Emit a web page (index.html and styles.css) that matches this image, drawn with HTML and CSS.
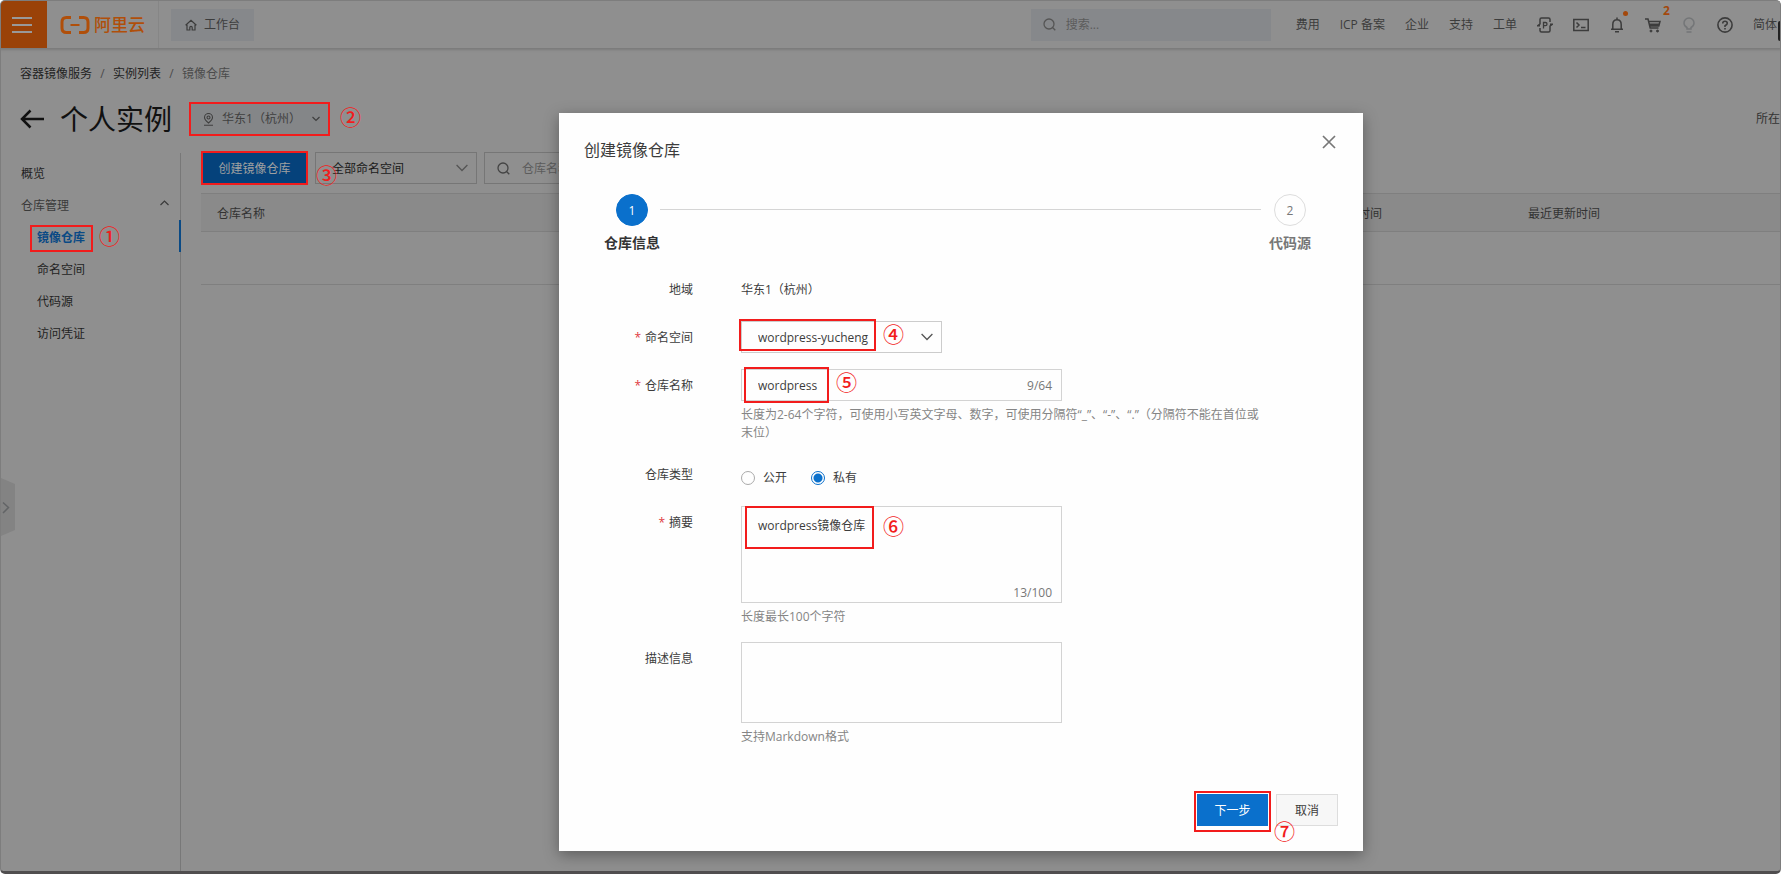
FILE: index.html
```html
<!DOCTYPE html>
<html lang="zh-CN">
<head>
<meta charset="utf-8">
<title>容器镜像服务</title>
<link rel="stylesheet" href="styles.css">
</head>
<body>
<div class="frame">
  <header class="topbar">
    <button class="menu-btn" aria-label="菜单"><span></span><span></span><span></span></button>
    <a class="logo" href="#">
      <svg width="30" height="18" viewBox="0 0 30 18" fill="none" stroke="currentColor"><path d="M11 1.500H6.500Q2 1.500 2 6v6q0 4.500 4.500 4.500H11M19 1.500h4.500Q28 1.500 28 6v6q0 4.500-4.500 4.500H19" stroke-width="3"/><path d="M10.500 9h9" stroke-width="2"/></svg>
      <span>阿里云</span>
    </a>
    <a class="workbench" href="#">
      <svg width="12" height="12" viewBox="0 0 12 12" fill="none" stroke="currentColor" stroke-width="1.200"><path d="M.6 6.200 6 1.200l5.400 5M2 5v6h2.800V8.500a1.200 1.200 0 0 1 2.400 0V11H10V5"/></svg>
      工作台
    </a>
    <label class="top-search">
      <svg width="13" height="13" viewBox="0 0 13 13" fill="none" stroke="currentColor" stroke-width="1.300"><circle cx="6" cy="6" r="5"/><path d="m9.500 9.500 2.800 2.800"/></svg>
      <input type="text" placeholder="搜索..." aria-label="搜索">
    </label>
    <nav class="topnav">
      <a href="#">费用</a><a href="#">ICP 备案</a><a href="#">企业</a><a href="#">支持</a><a href="#">工单</a>
      <a href="#" aria-label="应用"><svg width="16" height="16" viewBox="0 0 16 16" fill="none" stroke="currentColor" stroke-width="1.500"><path d="M3 4.500V2.500Q3 1 4.500 1h7Q13 1 13 2.500V5M3 11v2.500Q3 15 4.500 15h7q1.500 0 1.500-1.500V11M3 4.500V7L.8 8.700H3M13 11.500V9l2.200-1.700H13"/><path d="M6.500 11.500v-6h2q1.500 0 1.500 1.600T8.500 8.700h-2" stroke-width="1.300"/></svg></a>
      <a href="#" aria-label="命令行"><svg width="16" height="16" viewBox="0 0 16 16" fill="none" stroke="currentColor" stroke-width="1.500"><path d="M.8 2.500h14.400v11H.8zM3.500 5.500 6 8l-2.500 2.500M8 10.500h4.500"/></svg></a>
      <a class="has-badge" href="#" aria-label="消息"><svg width="16" height="16" viewBox="0 0 16 16" fill="none" stroke="currentColor" stroke-width="1.500"><path d="M8 .5v2M2 12.200h12M3.800 12V7.500Q3.800 2.700 8 2.700t4.200 4.800V12M6 14.700h4"/></svg><i class="dot"></i></a>
      <a class="has-badge" href="#" aria-label="购物车"><svg width="16" height="16" viewBox="0 0 16 16" fill="none" stroke="currentColor" stroke-width="1.500"><path d="M0 2h3l2.200 9h8.300"/><path d="M4 4.500h11L13.800 9H5"/><path d="M4.500 6.500h10L14 9H5z" fill="currentColor" stroke="none"/><circle cx="6" cy="14" r="1" fill="currentColor" stroke-width="1"/><circle cx="12.500" cy="14" r="1" fill="currentColor" stroke-width="1"/></svg><b class="count">2</b></a>
      <a class="faint" href="#" aria-label="提示"><svg width="16" height="16" viewBox="0 0 16 16" fill="none" stroke="currentColor" stroke-width="1.500"><path d="M6 12v-1.500Q3 9 3 6a5 5 0 0 1 10 0q0 3-3 4.500V12zM5.500 15h5"/></svg></a>
      <a href="#" aria-label="帮助"><svg width="16" height="16" viewBox="0 0 16 16" fill="none" stroke="currentColor" stroke-width="1.600"><circle cx="8" cy="8" r="7.100"/><path d="M5.700 6.500Q5.800 4.300 8 4.300t2.300 2Q10.300 7.500 8 8.800V10M8 11v1.600"/></svg></a>
      <a href="#">简体</a>
    </nav>
    <i class="edge-tab"></i>
  </header>

  <nav class="crumbs"><a href="#">容器镜像服务</a><i>/</i><a href="#">实例列表</a><i>/</i><span>镜像仓库</span></nav>

  <div class="title-row">
    <button class="back" aria-label="返回"><svg width="24" height="20" viewBox="0 0 24 20" fill="none" stroke="currentColor" stroke-width="2.500"><path d="M24 10H2M10.500 1.500 2 10l8.500 8.500"/></svg></button>
    <h1>个人实例</h1>
    <button class="region">
      <svg width="11" height="13" viewBox="0 0 11 13" fill="none" stroke="currentColor" stroke-width="1.100"><path d="M5.500 10Q1.500 6.800 1.500 4.500a4 4 0 0 1 8 0Q9.500 6.800 5.500 10zM1 12.300h9"/><circle cx="5.500" cy="4.500" r="1.500"/></svg>
      <span>华东1（杭州）</span>
      <svg width="8" height="6" viewBox="0 0 8 6" fill="none" stroke="currentColor" stroke-width="1.200"><path d="m.5 1 3.500 3.500L7.500 1"/></svg>
    </button>
    <span class="num">②</span>
    <span class="located">所在</span>
  </div>

  <div class="body">
    <aside class="sidebar">
      <a href="#">概览</a>
      <button class="group">仓库管理<svg width="9" height="6" viewBox="0 0 9 6" fill="none" stroke="currentColor" stroke-width="1.200"><path d="m.5 5 4-4 4 4"/></svg></button>
      <a class="sub active" href="#">镜像仓库<i class="mark mark-nav"></i><span class="num num-nav">①</span></a>
      <a class="sub" href="#">命名空间</a>
      <a class="sub" href="#">代码源</a>
      <a class="sub" href="#">访问凭证</a>
    </aside>
    <main class="content">
      <div class="toolbar">
        <button class="create">创建镜像仓库</button>
        <div class="select filter">
          <select aria-label="命名空间筛选"><option>全部命名空间</option></select>
          <svg width="12" height="8" viewBox="0 0 12 8" fill="none" stroke="currentColor" stroke-width="1.300"><path d="m.6 1 5.400 5.500L11.400 1"/></svg>
          <span class="num num-filter">③</span>
        </div>
        <label class="repo-search">
          <svg width="13" height="13" viewBox="0 0 13 13" fill="none" stroke="currentColor" stroke-width="1.300"><circle cx="6" cy="6" r="5"/><path d="m9.500 9.500 2.800 2.800"/></svg>
          <input type="text" placeholder="仓库名称" aria-label="仓库名称">
        </label>
      </div>
      <table class="repos">
        <thead><tr><th class="c-name">仓库名称</th><th class="c-created">创建时间</th><th>最近更新时间</th></tr></thead>
        <tbody><tr><td colspan="3"></td></tr></tbody>
      </table>
    </main>
  </div>

  <button class="handle" aria-label="展开"><svg width="14" height="58" viewBox="0 0 14 58" fill="none"><path d="M0 0 14 6v46L0 58z" fill="#838383"/><path d="m2 24.500 5.500 5L2 35" stroke="#626466" stroke-width="1.500"/></svg></button>
</div>

<section class="dialog" role="dialog" aria-labelledby="dlg-title">
  <div class="dlg-head">
    <h2 id="dlg-title">创建镜像仓库</h2>
    <button class="close" aria-label="关闭"><svg width="14" height="14" viewBox="0 0 14 14" fill="none" stroke="currentColor" stroke-width="1.700"><path d="m1 1 12 12M13 1 1 13"/></svg></button>
  </div>
  <ol class="steps">
    <li class="step on"><b>1</b><span>仓库信息</span></li>
    <li class="bar" aria-hidden="true"></li>
    <li class="step"><b>2</b><span>代码源</span></li>
  </ol>
  <form class="form">
    <div class="row"><span class="label">地域</span><div class="plain">华东1（杭州）</div></div>
    <div class="row">
      <label class="label req" for="ns">命名空间</label>
      <div class="field">
        <div class="select ns">
          <select id="ns"><option>wordpress-yucheng</option></select>
          <svg width="12" height="8" viewBox="0 0 12 8" fill="none" stroke="currentColor" stroke-width="1.300"><path d="m.6 1 5.400 5.500L11.400 1"/></svg>
          <i class="mark mark-ns"></i><span class="num num-ns">④</span>
        </div>
      </div>
    </div>
    <div class="row">
      <label class="label req" for="repo">仓库名称</label>
      <div class="field">
        <div class="box"><input id="repo" type="text" value="wordpress"><span class="counter">9/64</span>
          <i class="mark mark-repo"></i><span class="num num-repo">⑤</span></div>
        <p class="help">长度为2-64个字符，可使用小写英文字母、数字，可使用分隔符“_”、“-”、“.”（分隔符不能在首位或末位）</p>
      </div>
    </div>
    <div class="row">
      <span class="label">仓库类型</span>
      <div class="radios">
        <label><input type="radio" name="type">公开</label>
        <label><input type="radio" name="type" checked>私有</label>
      </div>
    </div>
    <div class="row">
      <label class="label req" for="sum">摘要</label>
      <div class="field">
        <div class="box area"><textarea id="sum">wordpress镜像仓库</textarea><span class="counter">13/100</span>
          <i class="mark mark-sum"></i><span class="num num-sum">⑥</span></div>
        <p class="help">长度最长100个字符</p>
      </div>
    </div>
    <div class="row">
      <label class="label" for="desc">描述信息</label>
      <div class="field">
        <div class="box desc"><textarea id="desc"></textarea></div>
        <p class="help">支持Markdown格式</p>
      </div>
    </div>
    <div class="actions">
      <div class="next-wrap"><button class="primary" type="button">下一步</button><i class="mark mark-next"></i><span class="num num-next">⑦</span></div>
      <button class="cancel" type="button">取消</button>
    </div>
  </form>
</section>
</body>
</html>
```
FILE: styles.css
```css
* { box-sizing: border-box; }
html { height: 100%; background: #fff; }
body {
  position: relative;
  min-height: 100%;
  margin: 0;
  display: flex;
  overflow: hidden;
  font: 12px/18px "Open Sans", "Noto Sans CJK SC", sans-serif;
  color: #2b2b2b;
}
button, input, select, textarea { font: inherit; color: inherit; margin: 0; }
button { border: 0; padding: 0; background: none; }
input, textarea, select { outline: 0; border-radius: 0; }
a { color: inherit; text-decoration: none; }
i { font-style: normal; }
svg { display: block; flex: none; }
h1, h2, p, ol { margin: 0; padding: 0; font-weight: 400; }

.frame {
  position: relative;
  flex: 1;
  min-width: 0;
  display: flex;
  flex-direction: column;
  background: #8f8f8f;
  border: 1px solid #7d7d7d;
  border-bottom: 3px solid #504e4f;
  border-radius: 5px;
  overflow: hidden;
}

/* top bar */
.topbar {
  position: relative;
  display: flex;
  align-items: center;
  height: 47px;
  color: #3c3c3c;
  box-shadow: 0 1px 2px 1px #7b7b7b;
}
.menu-btn {
  align-self: stretch;
  width: 46px;
  display: flex;
  flex-direction: column;
  align-items: center;
  justify-content: center;
  gap: 5px;
  padding-right: 5px;
  background: #9a4208;
}
.menu-btn span { width: 20px; height: 2px; background: #999; }
.logo {
  align-self: stretch;
  display: flex;
  align-items: center;
  gap: 4px;
  padding: 0 13px;
  border-right: 1px solid #868686;
  color: #b04f0a;
  font-size: 17px;
  font-weight: 500;
}
.workbench {
  display: flex;
  align-items: center;
  gap: 7px;
  height: 32px;
  margin-left: 12px;
  padding: 0 14px;
  background: #86888b;
}
.top-search {
  display: flex;
  align-items: center;
  gap: 10px;
  width: 240px;
  height: 32px;
  margin-left: auto;
  padding: 0 12px;
  background: #86888b;
  color: #555;
}
.top-search input, .repo-search input {
  flex: 1;
  min-width: 0;
  border: 0;
  padding: 0;
  background: none;
}
::placeholder { color: #5c5c5c; opacity: 1; }
.topnav {
  display: flex;
  align-items: center;
  gap: 20px;
  padding: 0 3px 0 25px;
  white-space: nowrap;
}
.has-badge { position: relative; }
.dot { position: absolute; right: -3px; top: -6px; width: 5px; height: 5px; border-radius: 50%; background: #a3480c; }
.count { position: absolute; right: -9px; top: -14px; color: #a3480c; line-height: 16px; }
.faint { color: #747678; }
.edge-tab { position: absolute; right: 0; top: 20px; width: 2px; height: 20px; border-radius: 2px 0 0 2px; background: #222; }

/* page heading */
.crumbs { display: flex; gap: 8px; padding: 17px 19px 0; color: #222; }
.crumbs i, .crumbs span { color: #4b4b4b; }
.crumbs i { width: 5px; text-align: center; }
.title-row {
  display: flex;
  align-items: center;
  padding: 16px 0 0 19px;
  color: #111;
}
.title-row h1 { margin-left: 16px; font-size: 28px; line-height: 40px; }
.region {
  display: flex;
  align-items: center;
  width: 141px;
  height: 34px;
  margin-left: 17px;
  padding: 0 8px 0 12px;
  border: 2px solid #f21c1c;
  background: #848688;
  color: #3f3f3f;
}
.region span { flex: 1; padding-left: 8px; text-align: left; white-space: nowrap; }
.title-row .num { margin: 0 0 6px 10px; }
.located { margin-left: auto; color: #333; }

/* annotations */
.num { color: #f21c1c; font: 500 21px/20px "Noto Sans CJK SC", sans-serif; }
.mark { position: absolute; border: 2px solid #f21c1c; pointer-events: none; }
.mark-nav { left: 29px; top: 5px; width: 63px; height: 27px; }
.mark-ns { left: -2px; top: -2px; width: 137px; height: 32px; }
.mark-repo { left: 2px; top: -3px; width: 85px; height: 36px; }
.mark-sum { left: 3px; top: -1px; width: 129px; height: 43px; }
.mark-next { left: -3px; top: -3px; width: 77px; height: 41px; }
.num-nav, .num-filter, .num-ns, .num-repo, .num-sum, .num-next { position: absolute; }
.num-nav { left: 98px; top: 5px; }
.num-filter { left: 1px; top: 12px; }
.num-ns { left: 142px; top: 2px; }
.num-repo { left: 94px; top: 1px; }
.num-sum { left: 141px; top: 8px; }
.num-next { left: 77px; top: 26px; }

/* body */
.body { flex: 1; display: flex; padding-top: 12px; }
.sidebar {
  width: 180px;
  margin-top: 2px;
  padding-top: 3px;
  border-right: 1px solid #787878;
}
.sidebar a, .group {
  position: relative;
  display: block;
  width: 100%;
  height: 32px;
  padding: 3px 0 0 20px;
  line-height: 29px;
  color: #1f1f1f;
}
.sidebar .group { display: flex; align-items: center; justify-content: space-between; padding-right: 11px; color: #3a3a3a; }
.group svg { margin-bottom: 5px; }
.sidebar .sub { padding-left: 36px; }
.sidebar .active { color: #0a4a85; font-weight: 700; }
.active::after { content: ""; position: absolute; right: -1px; top: 0; width: 2px; height: 32px; background: #0a4a85; }
.content { flex: 1; min-width: 0; padding-left: 20px; }
.toolbar { display: flex; align-items: center; gap: 7px; }
.create {
  width: 107px;
  height: 34px;
  padding-top: 2px;
  border: 2px solid #f21c1c;
  background: #05427b;
  color: #a0a0a0;
}
.select { position: relative; }
.select select {
  display: block;
  width: 100%;
  height: 32px;
  padding: 2px 30px 0 16px;
  border: 1px solid #ccc;
  background: transparent;
  appearance: none;
}
.select svg { position: absolute; right: 9px; top: 12px; color: #555; pointer-events: none; }
.filter { width: 162px; color: #1a1a1a; }
.filter select, .repo-search { border-color: #767676; }
.repo-search {
  display: flex;
  align-items: center;
  gap: 12px;
  width: 240px;
  height: 32px;
  padding: 0 12px;
  border: 1px solid #767676;
  color: #444;
}
.repo-search input { padding-top: 2px; }
.repos { width: 100%; margin-top: 8px; border-collapse: collapse; table-layout: fixed; color: #333; }
.repos th {
  height: 38px;
  padding: 2px 16px 0;
  border: solid #7f7f7f;
  border-width: 1px 0;
  background: #8a8a8a;
  text-align: left;
  font-weight: 400;
}
.repos td { height: 53px; border-bottom: 1px solid #7f7f7f; }
.c-name { width: 1117px; }
.c-created { width: 194px; }
.handle { position: absolute; left: 0; top: 477px; }

/* dialog */
.dialog {
  position: absolute;
  left: 559px;
  top: 113px;
  width: 804px;
  padding: 24px 25px 25px;
  background: #fefefe;
  box-shadow: 0 4px 14px rgba(0, 0, 0, .35);
  color: #3c3c3c;
  text-spacing-trim: space-all;
}
.dlg-head { display: flex; justify-content: space-between; }
.dlg-head h2 { font-size: 16px; line-height: 26px; }
.close { align-self: flex-start; margin-top: -2px; padding-right: 2px; color: #777; }
.steps { display: flex; list-style: none; padding: 31px 6px 0; }
.step { width: 84px; text-align: center; font-weight: 700; color: #777; }
.step b {
  display: block;
  width: 32px;
  height: 32px;
  margin: 0 auto;
  border: 1px solid #ddd;
  border-radius: 50%;
  font-weight: 400;
  line-height: 31px;
}
.step span { display: block; margin-top: 7px; font-size: 14px; line-height: 20px; }
.on { color: #333; }
.on b { border-color: #0a70cc; background: #0a70cc; color: #fff; }
.bar { flex: 1; height: 1px; margin: 15px -13px 0 -14px; background: #d5d5d5; }
.form { display: flex; flex-direction: column; gap: 16px; padding-top: 20px; }
.row { display: grid; grid-template-columns: 109px minmax(0, 1fr); column-gap: 48px; padding-right: 72px; }
.label, .plain { margin-bottom: -2px; line-height: 34px; }
.label { text-align: right; }
.req::before { content: "*"; margin-right: 4px; color: #e0393e; }
.ns { width: 201px; }
.box {
  position: relative;
  display: flex;
  align-items: center;
  width: 321px;
  height: 32px;
  border: 1px solid #d3d3d3;
}
.box input { flex: 1; min-width: 0; border: 0; padding: 2px 16px 0; background: none; }
.box textarea { flex: 1; align-self: stretch; border: 0; padding: 10px 16px; background: none; resize: none; }
.counter { padding: 2px 9px 0 0; color: #777; }
.area { height: 97px; }
.area .counter { position: absolute; right: 0; bottom: 0; }
.desc { height: 81px; }
.help { margin-top: 5px; color: #858585; }
.radios { display: flex; gap: 24px; padding-top: 4px; margin-bottom: -4px; }
.radios label { display: flex; align-items: center; gap: 8px; height: 32px; }
.radios input {
  appearance: none;
  width: 14px;
  height: 14px;
  border: 1px solid #aaa;
  border-radius: 50%;
}
.radios input:checked { border-color: #0a70cc; background: radial-gradient(circle, #0a70cc 4px, #fff 5px); }
.actions { display: flex; justify-content: flex-end; gap: 8px; margin-top: 32px; }
.next-wrap { position: relative; }
.primary { display: block; width: 71px; height: 32px; padding-top: 2px; background: #0a70cc; color: #fff; }
.cancel { width: 62px; height: 32px; padding-top: 2px; border: 1px solid #ddd; background: #f7f7f7; }
```
